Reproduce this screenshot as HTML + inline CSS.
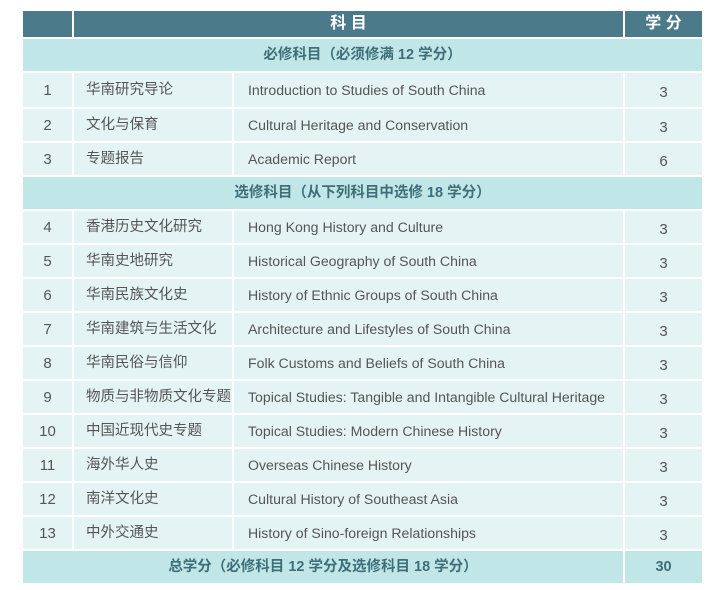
<!DOCTYPE html>
<html><head><meta charset="utf-8"><style>
body{margin:0;background:#fff;width:718px;height:590px;overflow:hidden;font-family:"Liberation Sans","Noto Sans CJK SC",sans-serif;}
table{position:absolute;left:21px;top:9px;width:681px;border-collapse:collapse;table-layout:fixed;}
td,th{border:2px solid #fff;padding:0;font-size:14.5px;color:#555;line-height:1;box-sizing:border-box;}
th{background:#4b7a8b;color:#fff;font-size:16px;height:28px;font-weight:bold;}
.sec td{background:#c0e6e7;color:#3f6e79;font-weight:bold;text-align:center;height:34px;font-size:14.5px;}
.r td{background:#e4f4f4;height:34px;}
.r td:nth-child(1),.r td:nth-child(4){text-align:center;font-size:15px;}
.r td:nth-child(4){padding-top:4px}
.r td:nth-child(2){padding-left:12px;}
.r td:nth-child(3){padding-left:14px;font-size:14.1px;}
.tot td{background:#c0e6e7;color:#3f6e79;font-weight:bold;text-align:center;height:34px;font-size:14.5px;}
</style></head><body>
<table>
<colgroup><col style="width:51px"><col style="width:160px"><col style="width:391px"><col style="width:79px"></colgroup>
<tr><th></th><th colspan="2">科 目</th><th>学 分</th></tr>
<tr class="sec"><td colspan="4">必修科目（必须修满 12 学分）</td></tr>
<tr class="r"><td style="height:36px">1</td><td>华南研究导论</td><td>Introduction to Studies of South China</td><td>3</td></tr>
<tr class="r"><td>2</td><td>文化与保育</td><td>Cultural Heritage and Conservation</td><td>3</td></tr>
<tr class="r"><td>3</td><td>专题报告</td><td>Academic Report</td><td>6</td></tr>
<tr class="sec"><td colspan="4">选修科目（从下列科目中选修 18 学分）</td></tr>
<tr class="r"><td>4</td><td>香港历史文化研究</td><td>Hong Kong History and Culture</td><td>3</td></tr>
<tr class="r"><td>5</td><td>华南史地研究</td><td>Historical Geography of South China</td><td>3</td></tr>
<tr class="r"><td>6</td><td>华南民族文化史</td><td>History of Ethnic Groups of South China</td><td>3</td></tr>
<tr class="r"><td>7</td><td>华南建筑与生活文化</td><td>Architecture and Lifestyles of South China</td><td>3</td></tr>
<tr class="r"><td>8</td><td>华南民俗与信仰</td><td>Folk Customs and Beliefs of South China</td><td>3</td></tr>
<tr class="r"><td>9</td><td>物质与非物质文化专题</td><td>Topical Studies: Tangible and Intangible Cultural Heritage</td><td>3</td></tr>
<tr class="r"><td>10</td><td>中国近现代史专题</td><td>Topical Studies: Modern Chinese History</td><td>3</td></tr>
<tr class="r"><td>11</td><td>海外华人史</td><td>Overseas Chinese History</td><td>3</td></tr>
<tr class="r"><td>12</td><td>南洋文化史</td><td>Cultural History of Southeast Asia</td><td>3</td></tr>
<tr class="r"><td>13</td><td>中外交通史</td><td>History of Sino-foreign Relationships</td><td>3</td></tr>
<tr class="tot"><td colspan="3">总学分（必修科目 12 学分及选修科目 18 学分）</td><td>30</td></tr>
</table>
</body></html>
